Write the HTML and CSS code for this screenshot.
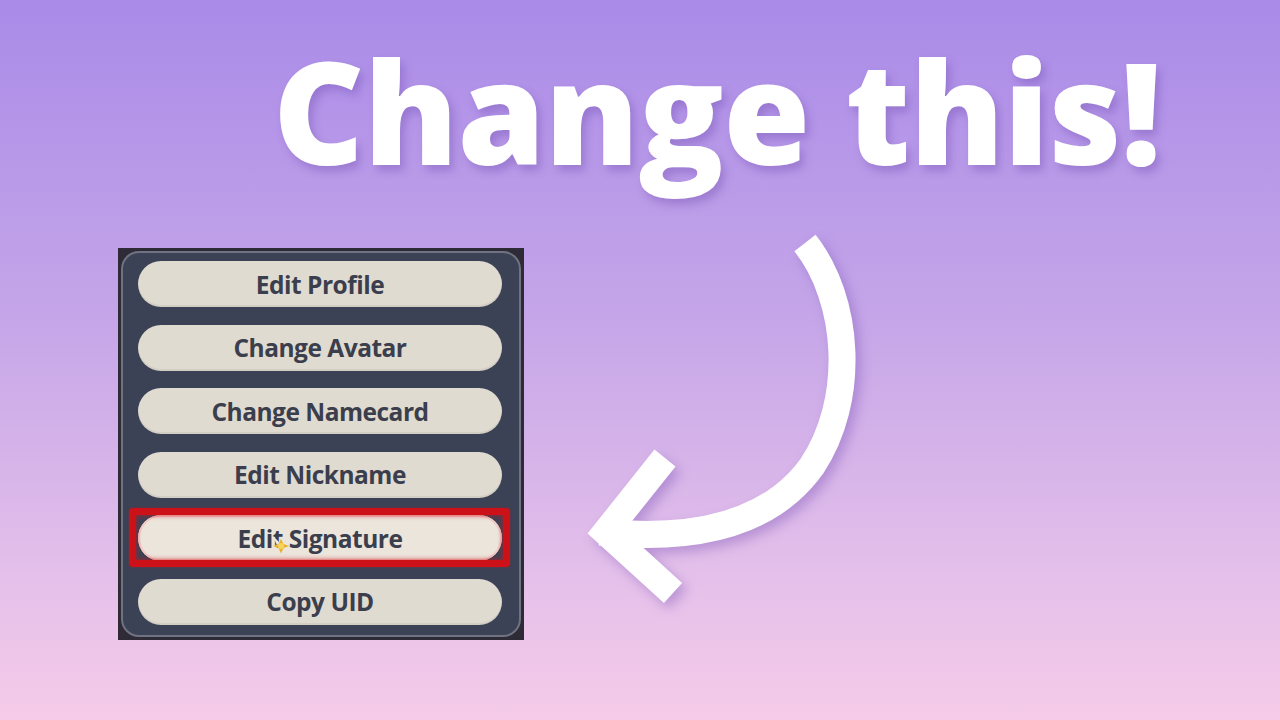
FILE: index.html
```html
<!DOCTYPE html>
<html lang="en">
<head>
<meta charset="utf-8">
<title>Change this!</title>
<link rel="stylesheet" href="styles.css">
</head>
<body>
<div class="stage">
  <header class="headline">
    <h1 class="title">Change this!</h1>
  </header>
  <main class="scene">
    <div class="panel">
      <div class="frame">
        <div class="option">Edit Profile</div>
        <div class="option">Change Avatar</div>
        <div class="option">Change Namecard</div>
        <div class="option">Edit Nickname</div>
        <div class="option option--selected">Edit Signature
          <svg class="cursor" width="22" height="22" viewBox="0 0 22 22" aria-hidden="true">
            <path d="M3 1 L12 10 L7 10.5 Z" fill="#f6f1e4" opacity="0.95"/>
            <path d="M11 4 L13.5 9 L19 11 L13.5 13 L11 18.5 L8.5 13 L3 11 L8.5 9 Z" fill="#eab02a"/>
            <circle cx="11" cy="11" r="3" fill="#f6d35a"/>
          </svg>
        </div>
        <div class="option">Copy UID</div>
      </div>
    </div>
    <svg class="arrow" width="320" height="400" viewBox="560 220 320 400" aria-hidden="true">
      <g fill="none" stroke="#ffffff" stroke-width="27">
        <path d="M805 243 C850 300 856 400 812 466 C772 522 700 542 600 532" stroke-linecap="butt"/>
        <polyline points="665,458 606,532 673,593" stroke-linejoin="miter" stroke-miterlimit="6" stroke-linecap="butt"/>
      </g>
    </svg>
  </main>
</div>
</body>
</html>
```

FILE: styles.css
```css
* {
  box-sizing: border-box;
}

html, body {
  margin: 0;
  padding: 0;
}

body {
  width: 1280px;
  height: 720px;
  overflow: hidden;
  font-family: "Open Sans", "Noto Sans", sans-serif;
}

.stage {
  width: 1280px;
  height: 720px;
  display: flex;
  flex-direction: column;
  background: linear-gradient(180deg, #a98be8 0%, #c6a6e8 45%, #e4c0ea 80%, #f6cbe9 100%);
}

.headline {
  height: 248px;
  padding: 40px 0 0 273px;
}

.title {
  margin: 0;
  font-size: 141px;
  line-height: 1;
  font-weight: 800;
  letter-spacing: -0.7px;
  color: #ffffff;
  white-space: nowrap;
  text-shadow: 4px 6px 8px rgba(105, 70, 170, 0.35);
}

.scene {
  display: flex;
  align-items: flex-start;
  padding-left: 118px;
}

/* in-game menu */
.panel {
  width: 406px;
  height: 392px;
  padding: 3px;
  background: #2e2b37;
}

.frame {
  height: 100%;
  border: 2px solid #6f7280;
  border-radius: 18px;
  background: #3c4255;
  padding: 8px 17px 0 15px;
  display: flex;
  flex-direction: column;
  gap: 17.6px;
}

.option {
  position: relative;
  height: 46px;
  border-radius: 23px;
  background: #e0dbd1;
  box-shadow: inset 0 -2px 0 rgba(0, 0, 0, 0.06);
  display: flex;
  align-items: center;
  justify-content: center;
  font-size: 24.5px;
  font-weight: 700;
  letter-spacing: -0.5px;
  color: #3b3e4c;
}

.option--selected {
  background: #ebe5dc;
  box-shadow: inset 0 0 0 2px #f3c9c4;
}

.option--selected::before {
  content: "";
  position: absolute;
  top: -7px;
  bottom: -6px;
  left: -9px;
  right: -8px;
  border: 7px solid #cc1218;
  border-radius: 4px;
  box-shadow: inset 0 0 4px 1px rgba(210, 20, 27, 0.6), 0 0 2px rgba(200, 20, 27, 0.6);
  pointer-events: none;
}

.cursor {
  position: absolute;
  left: 132px;
  top: 20px;
}

.arrow {
  margin: -28px 0 0 36px;
  overflow: visible;
  filter: drop-shadow(5px 6px 6px rgba(110, 70, 175, 0.35));
}
```
